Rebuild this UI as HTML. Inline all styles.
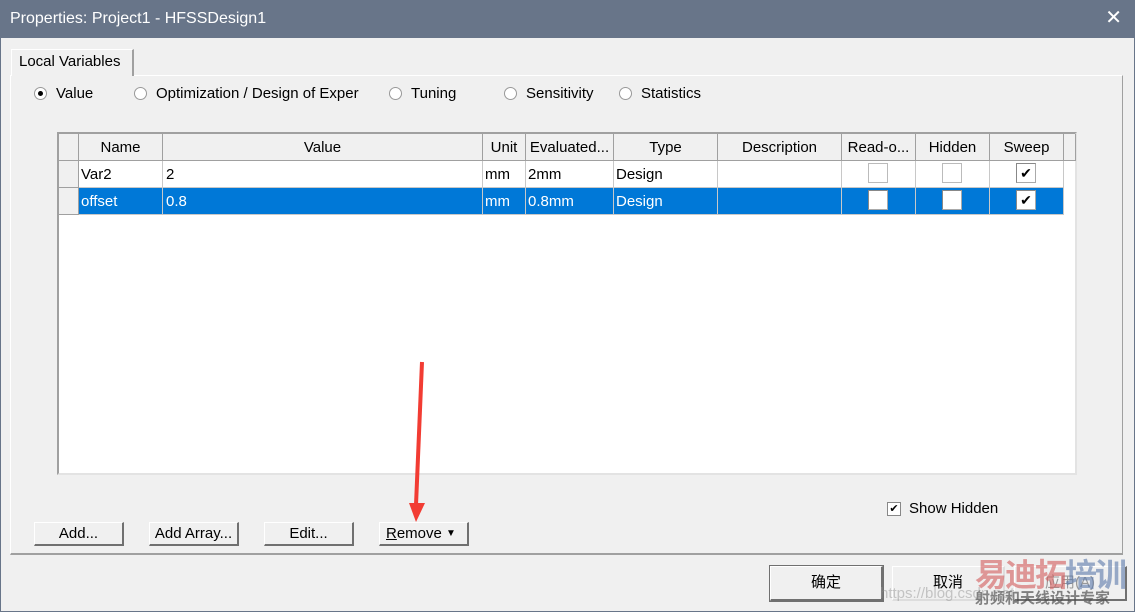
<!DOCTYPE html>
<html><head><meta charset="utf-8"><style>
*{box-sizing:border-box;margin:0;padding:0}
body{width:1135px;height:612px;background:#f0f0f0;font-family:"Liberation Sans","Noto Sans CJK SC",sans-serif;font-size:15px;color:#000;position:relative;overflow:hidden}
.abs{position:absolute}
.frame{left:0;top:0;width:1135px;height:612px;border:1px solid #687589;pointer-events:none}
.title{left:0;top:0;width:1135px;height:38px;background:#687589;color:#fff;font-size:16px;line-height:38px;padding-left:10px}
.close{right:13px;top:8px;font-size:20px;color:#fff;line-height:20px}
.panel{left:10px;top:75px;width:1113px;height:480px;border:1px solid #fff;border-right-color:#a0a0a0;border-bottom:2px solid #a0a0a0}
.tab{left:11px;top:49px;width:123px;height:27px;border:1px solid #fff;border-right:2px solid #a0a0a0;border-bottom:none;background:#f0f0f0;padding:3px 0 0 7px}
.radio{width:13px;height:13px;border-radius:50%;border:1px solid #999;background:#fff}
.grid{left:57px;top:132px;width:1020px;height:343px;background:#fff;border:2px solid #a0a0a0;border-right-color:#e3e3e3;border-bottom-color:#e3e3e3}
.c{position:absolute;height:27px;line-height:27px;border-right:1px solid #c8c8c8;border-bottom:1px solid #c8c8c8;white-space:nowrap;overflow:hidden}
.h{background:#f0f0f0;text-align:center;border-right:1px solid #a0a0a0;border-bottom:1px solid #a0a0a0}
.sel{background:#0078d7;color:#fff}
.cb{position:absolute;width:20px;height:20px;border:1px solid #aaa;background:#fff;border-top-color:#888;border-left-color:#888}
.btn{position:absolute;height:24px;background:#f0f0f0;border:1px solid #fff;border-right:2px solid #707070;border-bottom:2px solid #707070;text-align:center;line-height:21px}
</style></head><body>
<div class="abs title">Properties: Project1 - HFSSDesign1</div>
<div class="abs close">✕</div>
<div class="abs panel"></div>
<div class="abs tab">Local Variables</div>

<div class="abs radio" style="left:34px;top:87px"><div style="width:5px;height:5px;background:#000;border-radius:50%;margin:3px"></div></div>
<div class="abs" style="left:56px;top:85px">Value</div>
<div class="abs radio" style="left:134px;top:87px"></div>
<div class="abs" style="left:156px;top:85px">Optimization / Design of Exper</div>
<div class="abs radio" style="left:389px;top:87px"></div>
<div class="abs" style="left:411px;top:85px">Tuning</div>
<div class="abs radio" style="left:504px;top:87px"></div>
<div class="abs" style="left:526px;top:85px;width:69px;overflow:hidden;white-space:nowrap">Sensitivity</div>
<div class="abs radio" style="left:619px;top:87px"></div>
<div class="abs" style="left:641px;top:85px">Statistics</div>

<div class="abs grid">
<div class="c h" style="left:0;top:0;width:20px"></div>
<div class="c h" style="left:20px;top:0;width:84px">Name</div>
<div class="c h" style="left:104px;top:0;width:320px">Value</div>
<div class="c h" style="left:424px;top:0;width:43px">Unit</div>
<div class="c h" style="left:467px;top:0;width:88px">Evaluated...</div>
<div class="c h" style="left:555px;top:0;width:104px">Type</div>
<div class="c h" style="left:659px;top:0;width:124px">Description</div>
<div class="c h" style="left:783px;top:0;width:74px">Read-o...</div>
<div class="c h" style="left:857px;top:0;width:74px">Hidden</div>
<div class="c h" style="left:931px;top:0;width:74px">Sweep</div>
<div class="c h" style="left:1005px;top:0;width:12px"></div>

<div class="c h" style="left:0;top:27px;width:20px"></div>
<div class="c" style="left:20px;top:27px;width:84px;padding-left:2px">Var2</div>
<div class="c" style="left:104px;top:27px;width:320px;padding-left:3px">2</div>
<div class="c" style="left:424px;top:27px;width:43px;padding-left:2px">mm</div>
<div class="c" style="left:467px;top:27px;width:88px;padding-left:2px">2mm</div>
<div class="c" style="left:555px;top:27px;width:104px;padding-left:2px">Design</div>
<div class="c" style="left:659px;top:27px;width:124px"></div>
<div class="c" style="left:783px;top:27px;width:74px"></div>
<div class="c" style="left:857px;top:27px;width:74px"></div>
<div class="c" style="left:931px;top:27px;width:74px"></div>

<div class="c h" style="left:0;top:54px;width:20px"></div>
<div class="c sel" style="left:20px;top:54px;width:84px;padding-left:2px">offset</div>
<div class="c sel" style="left:104px;top:54px;width:320px;padding-left:3px">0.8</div>
<div class="c sel" style="left:424px;top:54px;width:43px;padding-left:2px">mm</div>
<div class="c sel" style="left:467px;top:54px;width:88px;padding-left:2px">0.8mm</div>
<div class="c sel" style="left:555px;top:54px;width:104px;padding-left:2px">Design</div>
<div class="c sel" style="left:659px;top:54px;width:124px"></div>
<div class="c sel" style="left:783px;top:54px;width:74px"></div>
<div class="c sel" style="left:857px;top:54px;width:74px"></div>
<div class="c sel" style="left:931px;top:54px;width:74px"></div>

<div class="cb" style="left:809px;top:29px;border-color:#bbb"></div>
<div class="cb" style="left:883px;top:29px;border-color:#bbb"></div>
<div class="cb" style="left:957px;top:29px;line-height:18px;text-align:center;font-size:14px">✔</div>
<div class="cb" style="left:809px;top:56px"></div>
<div class="cb" style="left:883px;top:56px"></div>
<div class="cb" style="left:957px;top:56px;line-height:18px;text-align:center;font-size:14px">✔</div>
</div>

<div class="abs" style="left:887px;top:502px;width:14px;height:14px;border:1px solid #888;background:#fff;font-size:11px;line-height:12px;text-align:center">✔</div>
<div class="abs" style="left:909px;top:500px">Show Hidden</div>

<div class="btn" style="left:34px;top:522px;width:90px">Add...</div>
<div class="btn" style="left:149px;top:522px;width:90px">Add Array...</div>
<div class="btn" style="left:264px;top:522px;width:90px">Edit...</div>
<div class="btn" style="left:379px;top:522px;width:90px;text-align:left;padding-left:6px"><u>R</u>emove <span style="font-size:10px;position:relative;top:-2px">▼</span></div>

<div class="btn" style="left:770px;top:566px;width:113px;height:35px;line-height:32px;outline:1px solid #707070">确定</div>
<div class="btn" style="left:892px;top:566px;width:113px;height:35px;line-height:32px;border-color:#fff #ddd #ddd #fff">取消</div>
<div class="btn" style="left:1014px;top:566px;width:113px;height:35px;line-height:32px;color:#999">应用(A)</div>

<div class="abs" style="left:975px;top:550px;font-size:32px;font-weight:bold;color:rgba(210,90,90,.6);letter-spacing:-2px">易迪拓<span style="color:rgba(90,120,170,.6)">培训</span></div>
<div class="abs" style="left:975px;top:587px;font-size:15px;font-weight:bold;color:rgba(80,80,80,.7)">射频和天线设计专家</div>
<div class="abs" style="left:880px;top:585px;font-size:15px;color:rgba(150,150,150,.5)">https://blog.csdn.net</div>

<svg class="abs" style="left:400px;top:355px" width="40" height="180"><path d="M22 7 L16 150" stroke="#f23c33" stroke-width="4"/><path d="M9 148 L25 148 L16 167 Z" fill="#f23c33"/></svg>
<div class="abs frame"></div>
</body></html>
